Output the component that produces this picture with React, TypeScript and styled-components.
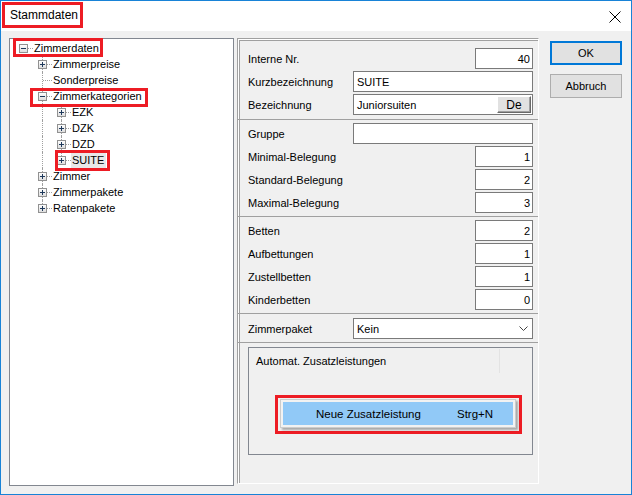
import React from 'react'
import styled, { createGlobalStyle } from 'styled-components'

const GlobalStyle = createGlobalStyle`
  html, body {
    margin: 0;
    padding: 0;
    background: #fff;
  }
  body {
    font-family: "Liberation Sans", Arial, sans-serif;
    font-size: 11px;
    color: #000;
  }
`

const RED = '#ed1c24'

const Window = styled.div`
  width: 632px;
  height: 495px;
  box-sizing: border-box;
  border: 1px solid #1883d7;
  display: flex;
  flex-direction: column;
  background: #f0f0f0;
`

const TitleBar = styled.div`
  height: 30px;
  flex: none;
  background: #fff;
  display: flex;
  align-items: flex-start;
  padding: 1px 0 0 1px;
  box-sizing: border-box;
`

const TitleText = styled.span`
  border: 3px solid ${RED};
  padding: 0 2px 0 5px;
  height: 20px;
  line-height: 20px;
  font-size: 12px;
`

const CloseIcon = styled.svg`
  margin: 9px 10px 0 auto;
`

const Body = styled.div`
  flex: 1;
  display: flex;
  align-items: flex-start;
  padding: 7px 0 0 8px;
`

const Tree = styled.div`
  width: 225px;
  height: 448px;
  box-sizing: border-box;
  border: 1px solid #828790;
  background: #fff;
  padding: 1px 0 0 4px;
  flex: none;
`

const TreeRow = styled.div`
  display: flex;
  align-items: center;
  height: 16px;
`

const Guide = styled.span<{ $line: boolean }>`
  position: relative;
  flex: none;
  width: 19px;
  height: 16px;
  &::before {
    content: '';
    display: ${({ $line }) => ($line ? 'block' : 'none')};
    position: absolute;
    left: 9px;
    top: 0;
    bottom: 0;
    border-left: 1px dotted #a0a0a0;
  }
`

const Connector = styled.span<{ $top: boolean; $bottom: boolean }>`
  position: relative;
  flex: none;
  width: 19px;
  height: 16px;
  &::before {
    content: '';
    display: ${({ $top, $bottom }) => ($top || $bottom ? 'block' : 'none')};
    position: absolute;
    left: 9px;
    top: ${({ $top }) => ($top ? 0 : 8)}px;
    bottom: ${({ $bottom }) => ($bottom ? 0 : 8)}px;
    border-left: 1px dotted #a0a0a0;
  }
  &::after {
    content: '';
    position: absolute;
    left: 10px;
    top: 8px;
    width: 9px;
    border-top: 1px dotted #a0a0a0;
  }
`

const ExpanderSvg = styled.svg`
  position: absolute;
  left: 5px;
  top: 4px;
  z-index: 1;
`

const Mark = styled.span<{ $inset?: [number, number, number, number] }>`
  position: relative;
  display: inline-flex;
  align-items: center;
  &::after {
    content: '';
    display: ${({ $inset }) => ($inset ? 'block' : 'none')};
    position: absolute;
    ${({ $inset = [0, 0, 0, 0] }) =>
      `top: ${$inset[0]}px; right: ${$inset[1]}px; bottom: ${$inset[2]}px; left: ${$inset[3]}px;`}
    border: 3px solid ${RED};
    pointer-events: none;
    z-index: 2;
  }
`

const NodeLabel = styled.span<{ $selected?: boolean }>`
  height: 16px;
  line-height: 16px;
  padding: 0 2px 0 1px;
  white-space: nowrap;
  background: ${({ $selected }) => ($selected ? '#e8e8e8' : 'transparent')};
`

const Panel = styled.div`
  width: 302px;
  height: 446px;
  box-sizing: border-box;
  margin-left: 3px;
  flex: none;
  border: 1px solid;
  border-color: #a0a0a0 #fff #fff #a0a0a0;
  box-shadow: inset 1px 1px 0 #fff, inset 2px 2px 0 #a0a0a0;
  display: flex;
  flex-direction: column;
`

const Section = styled.div<{ $pt: number; $pb: number; $line?: boolean }>`
  padding: ${({ $pt, $pb }) => `${$pt}px 5px ${$pb}px 10px`};
  border-bottom: ${({ $line = true }) => ($line ? '1px solid #a0a0a0' : 'none')};
`

const FieldRow = styled.div`
  display: flex;
  align-items: flex-start;
  height: 23px;
`

const FieldLabel = styled.span`
  line-height: 21px;
  padding-top: 1px;
  white-space: nowrap;
`

const TextBox = styled.div<{ $wide?: boolean; $right?: boolean }>`
  margin-left: auto;
  width: ${({ $wide }) => ($wide ? 180 : 58)}px;
  height: 21px;
  box-sizing: border-box;
  border: 1px solid #7a7a7a;
  background: #fff;
  display: flex;
  align-items: center;
  justify-content: ${({ $right }) => ($right ? 'flex-end' : 'flex-start')};
  padding: 0 2px 0 3px;
`

const BoxText = styled.span`
  flex: 1;
  white-space: nowrap;
`

const LangButton = styled.span`
  flex: none;
  width: 34px;
  height: 17px;
  box-sizing: border-box;
  margin-right: -1px;
  border: 1px solid;
  border-color: #fff #696969 #696969 #fff;
  box-shadow: inset -1px -1px 0 #a0a0a0;
  background: #e1e1e1;
  display: flex;
  align-items: center;
  justify-content: center;
  font-size: 12px;
`

const ComboBox = styled(TextBox)`
  padding-right: 4px;
`

const GroupBox = styled.div`
  position: relative;
  margin: 4px 5px 0 10px;
  height: 108px;
  box-sizing: border-box;
  border: 1px solid #828790;
`

const ListHeader = styled.div`
  display: flex;
  margin-top: 1px;
  height: 24px;
`

const HeaderCell = styled.span`
  width: 243px;
  padding-left: 7px;
  line-height: 24px;
  border-right: 1px solid #e3e3e3;
  white-space: nowrap;
`

const PopupMark = styled.div`
  position: absolute;
  left: 26px;
  top: 47px;
  border: 3px solid ${RED};
  padding: 1px 3px 3px 2px;
`

const Menu = styled.div`
  border: 1px solid #cccccc;
  background: #f2f2f2;
  padding: 2px;
  box-shadow: 2px 2px 2px rgba(0, 0, 0, 0.3);
`

const MenuItem = styled.div`
  width: 230px;
  height: 23px;
  background: #91c9f7;
  display: grid;
  grid-template-columns: 141px auto;
  align-items: center;
  padding-left: 33px;
  box-sizing: border-box;
  font-size: 11.5px;
`

const ButtonColumn = styled.div`
  margin-left: 11px;
  padding-top: 3px;
  display: flex;
  flex-direction: column;
  gap: 9px;
`

const Button = styled.div<{ $default?: boolean }>`
  width: 72px;
  height: 24px;
  box-sizing: border-box;
  background: #e1e1e1;
  border: ${({ $default }) => ($default ? '2px solid #0078d7' : '1px solid #adadad')};
  display: flex;
  align-items: center;
  justify-content: center;
`

type TreeNode = {
  label: string
  level: number
  exp?: 'plus' | 'minus'
  guides: boolean[]
  top: boolean
  bottom: boolean
  selected?: boolean
  mark?: [number, number, number, number]
}

const nodes: TreeNode[] = [
  { label: 'Zimmerdaten', level: 0, exp: 'minus', guides: [], top: false, bottom: false, mark: [-2, -2, -1, -1] },
  { label: 'Zimmerpreise', level: 1, exp: 'plus', guides: [false], top: true, bottom: true },
  { label: 'Sonderpreise', level: 1, guides: [false], top: true, bottom: true },
  { label: 'Zimmerkategorien', level: 1, exp: 'minus', guides: [false], top: true, bottom: true, mark: [0, -4, -3, -3] },
  { label: 'EZK', level: 2, exp: 'plus', guides: [false, true], top: true, bottom: true },
  { label: 'DZK', level: 2, exp: 'plus', guides: [false, true], top: true, bottom: true },
  { label: 'DZD', level: 2, exp: 'plus', guides: [false, true], top: true, bottom: true },
  { label: 'SUITE', level: 2, exp: 'plus', guides: [false, true], top: true, bottom: false, selected: true, mark: [-2, -4, -3, 3] },
  { label: 'Zimmer', level: 1, exp: 'plus', guides: [false], top: true, bottom: true },
  { label: 'Zimmerpakete', level: 1, exp: 'plus', guides: [false], top: true, bottom: true },
  { label: 'Ratenpakete', level: 1, exp: 'plus', guides: [false], top: true, bottom: false },
]

function Expander({ open }: { open: boolean }) {
  return (
    <ExpanderSvg width={9} height={9} viewBox="0 0 9 9">
      <defs>
        <linearGradient id="expGrad" x1="0" y1="0" x2="0" y2="1">
          <stop offset="0" stopColor="#ffffff" />
          <stop offset="1" stopColor="#dcdcdc" />
        </linearGradient>
      </defs>
      <rect x="0.5" y="0.5" width="8" height="8" fill="url(#expGrad)" stroke="#919191" />
      <path d="M2 4.5h5" stroke="#1e395b" />
      {!open && <path d="M4.5 2v5" stroke="#1e395b" />}
    </ExpanderSvg>
  )
}

function TreeItem({ node }: { node: TreeNode }) {
  return (
    <TreeRow>
      {node.guides.map((g, i) => (
        <Guide key={i} $line={g} />
      ))}
      <Mark $inset={node.mark}>
        <Connector $top={node.top} $bottom={node.bottom}>
          {node.exp && <Expander open={node.exp === 'minus'} />}
        </Connector>
        <NodeLabel $selected={node.selected}>{node.label}</NodeLabel>
      </Mark>
    </TreeRow>
  )
}

function Field({ label, value, wide }: { label: string; value: string; wide?: boolean }) {
  return (
    <FieldRow>
      <FieldLabel>{label}</FieldLabel>
      <TextBox $wide={wide} $right={!wide}>
        {wide ? <BoxText>{value}</BoxText> : value}
      </TextBox>
    </FieldRow>
  )
}

export default function App() {
  return (
    <>
      <GlobalStyle />
      <Window>
        <TitleBar>
          <TitleText>Stammdaten</TitleText>
          <CloseIcon width={12} height={12} viewBox="0 0 12 12">
            <path d="M0.5 0.5l11 11M11.5 0.5l-11 11" stroke="#000" strokeWidth="1" />
          </CloseIcon>
        </TitleBar>
        <Body>
          <Tree>
            {nodes.map((n) => (
              <TreeItem key={n.label} node={n} />
            ))}
          </Tree>
          <Panel>
            <Section $pt={9} $pb={2}>
              <Field label="Interne Nr." value="40" />
              <Field label="Kurzbezeichnung" value="SUITE" wide />
              <FieldRow>
                <FieldLabel>Bezeichnung</FieldLabel>
                <TextBox $wide>
                  <BoxText>Juniorsuiten</BoxText>
                  <LangButton>De</LangButton>
                </TextBox>
              </FieldRow>
            </Section>
            <Section $pt={3} $pb={1}>
              <Field label="Gruppe" value="" wide />
              <Field label="Minimal-Belegung" value="1" />
              <Field label="Standard-Belegung" value="2" />
              <Field label="Maximal-Belegung" value="3" />
            </Section>
            <Section $pt={3} $pb={1}>
              <Field label="Betten" value="2" />
              <Field label="Aufbettungen" value="1" />
              <Field label="Zustellbetten" value="1" />
              <Field label="Kinderbetten" value="0" />
            </Section>
            <Section $pt={4} $pb={1}>
              <FieldRow>
                <FieldLabel>Zimmerpaket</FieldLabel>
                <ComboBox $wide>
                  <BoxText>Kein</BoxText>
                  <svg width={9} height={5} viewBox="0 0 9 5">
                    <path d="M0.5 0.5l4 4 4-4" fill="none" stroke="#444" />
                  </svg>
                </ComboBox>
              </FieldRow>
            </Section>
            <GroupBox>
              <ListHeader>
                <HeaderCell>Automat. Zusatzleistungen</HeaderCell>
              </ListHeader>
              <PopupMark>
                <Menu>
                  <MenuItem>
                    <span>Neue Zusatzleistung</span>
                    <span>Strg+N</span>
                  </MenuItem>
                </Menu>
              </PopupMark>
            </GroupBox>
          </Panel>
          <ButtonColumn>
            <Button $default>OK</Button>
            <Button>Abbruch</Button>
          </ButtonColumn>
        </Body>
      </Window>
    </>
  )
}
